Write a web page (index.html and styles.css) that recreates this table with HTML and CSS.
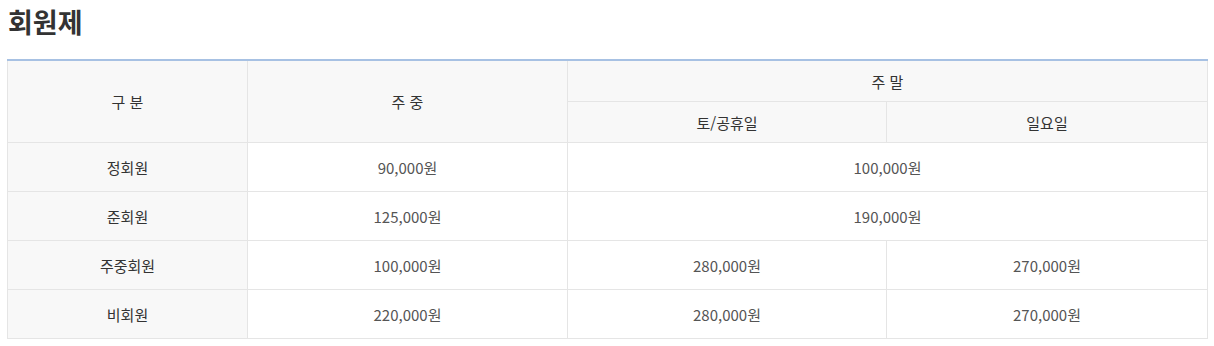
FILE: index.html
```html
<!DOCTYPE html>
<html lang="ko">
<head>
<meta charset="utf-8">
<link rel="stylesheet" href="styles.css">
</head>
<body>
<div class="page">
  <h2 class="title">회원제</h2>
  <table class="fee">
    <colgroup>
      <col class="c1"><col class="c2"><col class="c3"><col class="c4">
    </colgroup>
    <thead>
      <tr>
        <th rowspan="2">구 분</th>
        <th rowspan="2">주 중</th>
        <th colspan="2">주 말</th>
      </tr>
      <tr>
        <th>토/공휴일</th>
        <th>일요일</th>
      </tr>
    </thead>
    <tbody>
      <tr><th>정회원</th><td>90,000원</td><td colspan="2">100,000원</td></tr>
      <tr><th>준회원</th><td>125,000원</td><td colspan="2">190,000원</td></tr>
      <tr><th>주중회원</th><td>100,000원</td><td>280,000원</td><td>270,000원</td></tr>
      <tr><th>비회원</th><td>220,000원</td><td>280,000원</td><td>270,000원</td></tr>
    </tbody>
  </table>
</div>
</body>
</html>
```
FILE: styles.css
```css
html, body {
  margin: 0;
  padding: 0;
  background: #fff;
}
.page {
  padding: 0 7px;
  font-family: "Noto Sans CJK KR", "Noto Sans", sans-serif;
}
.title {
  margin: 0;
  padding: 3px 0 0 1px;
  height: 59px;
  box-sizing: border-box;
  font-size: 27px;
  line-height: 38px;
  font-weight: 700;
  color: #333;
}
.fee {
  width: 1200px;
  border-collapse: collapse;
  table-layout: fixed;
  border-top: 2px solid #a7c1e3;
}
.c1 { width: 240px; }
.c2 { width: 320px; }
.c3 { width: 319px; }
.c4 { width: 321px; }
.fee th, .fee td {
  border: 1px solid #e5e5e5;
  text-align: center;
  font-size: 15px;
  font-weight: 400;
  color: #555;
  padding: 0;
}
.fee thead tr:first-child th {
  border-top: 0;
}
.fee thead th {
  background: #f8f8f8;
  color: #333;
  height: 40px;
}
.fee tbody th {
  background: #f8f8f8;
  color: #333;
}
.fee tbody th, .fee tbody td {
  height: 48px;
}
```
